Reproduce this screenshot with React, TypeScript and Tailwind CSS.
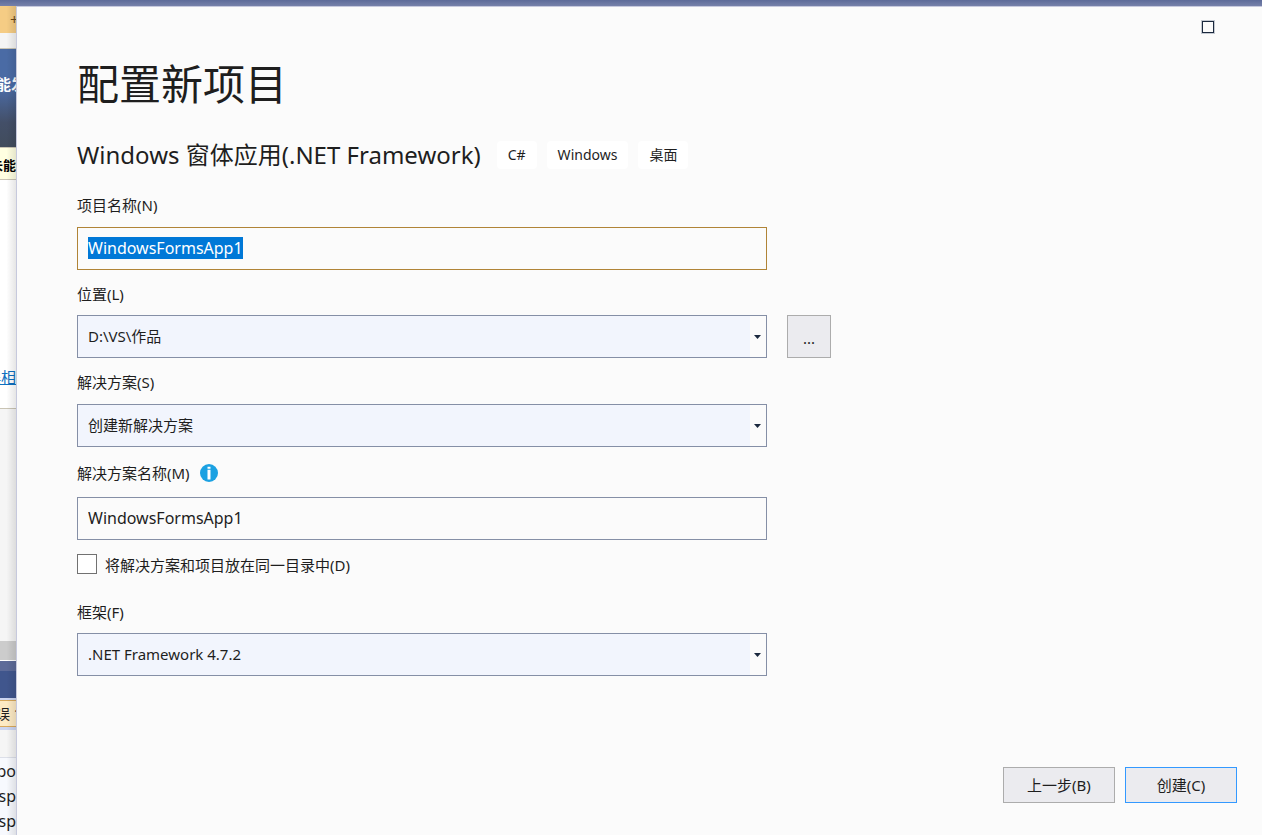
import { useEffect, useRef, type ReactNode } from 'react';

const TAGS = ['C#', 'Windows', '桌面'];
const OUTPUT_LINES = ['ppo', 'usp', 'usp', 'sus'];

const BackgroundWindow = () => (
  <div
    aria-hidden="true"
    className="grid w-4 shrink-0 overflow-hidden bg-white text-[15px] text-[#1e1e1e]"
  >
    <div className="col-start-1 row-start-1 flex w-4 flex-col overflow-hidden">
      <div className="flex h-[27px] items-center overflow-hidden bg-[#f5cc84] pl-[10px] text-[#6b4c1e]">+</div>
      <div className="h-[15px] bg-[#f5f5f5]" />
      <div className="h-[100px] overflow-hidden border-y border-[#c9c4b4] bg-linear-to-b from-[#4a6ba5] from-40% via-[#434f68] via-75% to-[#414c5c] pt-6 font-bold whitespace-nowrap text-white">
        <span className="-ml-1">能发</span>
      </div>
      <div className="flex h-[32px] items-center justify-end overflow-hidden border-b border-[#c9c4b4] bg-[#ffffe1] pt-1 text-[13px] font-bold whitespace-nowrap text-black">
        未能
      </div>
      <div className="flex h-[229px] items-end justify-end overflow-hidden border-b border-[#c9c4b4] bg-white pb-5 whitespace-nowrap text-[#0e70c0] underline">
        误相
      </div>
      <div className="h-[232px] bg-[#f5f5f5]" />
      <div className="h-[20px] border-b border-white bg-[#cccccc]" />
      <div className="h-[10px] bg-[#5d6b99]" />
      <div className="h-[27px] bg-[#40568d]" />
      <div className="h-[2px] bg-[#ccd5f0]" />
      <div className="flex h-[27px] items-center overflow-hidden border-y border-[#d9a95c] bg-[#fdeac4] text-sm whitespace-nowrap">
        <span className="-ml-1">误 1</span>
      </div>
      <div className="h-[3px] bg-[#ccd5f0]" />
      <div className="h-[28px] border-b border-[#dcdfe8] bg-[#f5f5f5]" />
      <div className="flex h-0 grow flex-col overflow-hidden bg-[#f7f9fe] text-base">
        {OUTPUT_LINES.map((line, i) => (
          <div key={i} className="flex h-[25px] shrink-0 items-center justify-end overflow-hidden">
            {line}
          </div>
        ))}
      </div>
    </div>
    <div className="z-10 col-start-1 row-start-1 bg-linear-to-r from-transparent from-40% to-black/10" />
  </div>
);

const Label = ({ htmlFor, children }: { htmlFor: string; children: ReactNode }) => (
  <label htmlFor={htmlFor} className="h-6 leading-6">
    {children}
  </label>
);

const SelectBox = ({ id, value }: { id: string; value: string }) => (
  <div className="grid h-[43px] w-full max-w-[690px] border border-[#858fa6] bg-[#fbfbfb]">
    <select
      id={id}
      defaultValue={value}
      className="col-start-1 row-start-1 w-full appearance-none border-r-16 border-[#fbfbfb] bg-[#f2f5fd] px-[10px] outline-none"
    >
      <option>{value}</option>
    </select>
    <svg
      className="pointer-events-none col-start-1 row-start-1 mr-[5px] self-center justify-self-end"
      width="7"
      height="4"
      viewBox="0 0 7 4"
      fill="#1b293e"
    >
      <path d="M0 0h7L3.5 4z" />
    </svg>
  </div>
);

const InfoIcon = () => (
  <svg width="18" height="18" viewBox="0 0 18 18" role="img" aria-label="信息">
    <circle cx="9" cy="9" r="9" fill="#1ba1e2" />
    <path d="M7.5 2.7h3v2.1h-3zM7.5 5.7h3v9.8h-3z" fill="#fff" />
  </svg>
);

export default function App() {
  const nameRef = useRef<HTMLInputElement>(null);

  useEffect(() => {
    nameRef.current?.focus();
    nameRef.current?.select();
  }, []);

  return (
    <div className="flex min-h-screen flex-col font-['Noto_Sans','Noto_Sans_CJK_SC',sans-serif] text-[15px] text-[#1e1e1e]">
      <div className="h-[6px] bg-linear-to-b from-[#5d6b99] to-[#7681aa]" />
      <div className="flex grow">
        <BackgroundWindow />
        <main className="flex min-w-0 grow flex-col border-t border-l border-[#c6c9dd] bg-[#fbfbfb]">
          <div className="flex h-[40px] items-center justify-end pr-12">
            <button type="button" aria-label="最大化" className="size-3 border border-[#1b293e] outline outline-[#c4c9d1]" />
          </div>

          <form className="flex grow flex-col pl-[60px]">
            <h1 className="mt-[9px] text-[42px] leading-[56px]">配置新项目</h1>

            <div className="mt-6 flex flex-wrap items-center">
              <h2 className="mr-4 text-2xl leading-[37px]">Windows 窗体应用(.NET Framework)</h2>
              <ul className="flex gap-[10px]">
                {TAGS.map((tag) => (
                  <li key={tag} className="rounded bg-white px-[11px] text-sm leading-7">
                    {tag}
                  </li>
                ))}
              </ul>
            </div>

            <div className="mt-[20px] flex flex-col gap-[10px]">
              <Label htmlFor="project-name">项目名称(N)</Label>
              <input
                ref={nameRef}
                id="project-name"
                type="text"
                defaultValue="WindowsFormsApp1"
                className="h-[43px] w-full max-w-[690px] border border-[#b08437] px-[10px] pb-[2px] text-base outline-none selection:bg-[#0078d7] selection:text-white"
              />
            </div>

            <div className="mt-3 flex flex-col gap-[9px]">
              <Label htmlFor="location">位置(L)</Label>
              <div className="flex gap-5">
                <SelectBox id="location" value="D:\VS\作品" />
                <button type="button" className="h-[43px] w-11 shrink-0 border border-[#acacac] bg-[#ebebef] pt-1">
                  ...
                </button>
              </div>
            </div>

            <div className="mt-3 flex flex-col gap-[10px]">
              <Label htmlFor="solution">解决方案(S)</Label>
              <SelectBox id="solution" value="创建新解决方案" />
            </div>

            <div className="mt-[14px] flex flex-col gap-3">
              <div className="flex items-center gap-[10px]">
                <Label htmlFor="solution-name">解决方案名称(M)</Label>
                <InfoIcon />
              </div>
              <input
                id="solution-name"
                type="text"
                defaultValue="WindowsFormsApp1"
                className="h-[43px] w-full max-w-[690px] border border-[#858fa6] px-[10px] pb-[2px] text-base outline-none"
              />
            </div>

            <label className="mt-[14px] flex h-5 items-center gap-2">
              <input type="checkbox" className="size-5 appearance-none border border-[#717171] bg-white" />
              <span className="pt-[2px]">将解决方案和项目放在同一目录中(D)</span>
            </label>

            <div className="mt-[26px] flex flex-col gap-[9px]">
              <Label htmlFor="framework">框架(F)</Label>
              <SelectBox id="framework" value=".NET Framework 4.7.2" />
            </div>

            <div className="mt-auto flex justify-end gap-[10px] pt-8 pr-[25px] pb-8">
              <button type="button" className="h-9 w-28 border border-[#acacac] bg-[#ebebef]">
                上一步(B)
              </button>
              <button type="submit" className="h-9 w-28 border border-[#3399ff] bg-[#ebebef]">
                创建(C)
              </button>
            </div>
          </form>
        </main>
      </div>
    </div>
  );
}
